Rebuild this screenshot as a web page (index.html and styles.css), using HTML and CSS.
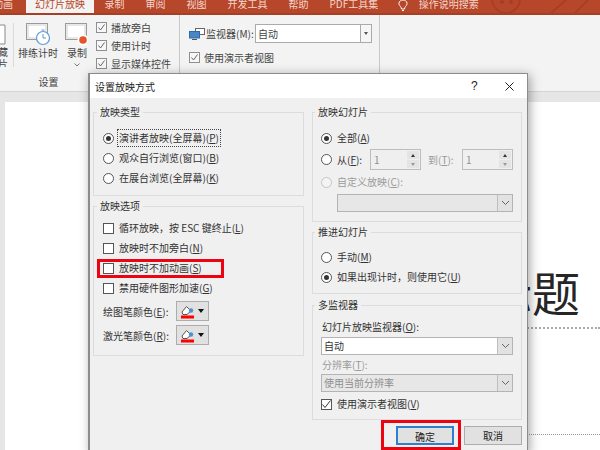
FILE: index.html
```html
<!DOCTYPE html>
<html lang="zh">
<head>
<meta charset="utf-8">
<title>设置放映方式</title>
<link rel="stylesheet" href="styles.css">
</head>
<body>
<div class="app">
  <div class="tabs">
    <span class="tab tab-first">动画</span>
    <span class="tab tab-active">幻灯片放映</span>
    <span class="tab">录制</span>
    <span class="tab">审阅</span>
    <span class="tab">视图</span>
    <span class="tab">开发工具</span>
    <span class="tab">帮助</span>
    <span class="tab">PDF工具集</span>
    <svg class="bulb" width="10" height="12" viewBox="0 0 10 12"><path d="M2.500 6.500C1 5 .8 3.800 1 3 1.500 1 3 0 5 0s3.500 1 4 3c.2.800 0 2-1.500 3.500C7 7 6.600 8 6.500 9h-3C3.400 8 3 7 2.500 6.500ZM4 10.500h2" fill="none" stroke="#fff" stroke-width="1"/></svg>
    <span class="tab tab-search">操作说明搜索</span>
    <svg class="circuit" width="110" height="15" viewBox="0 0 110 15"><g fill="none" stroke="#a63d22" stroke-width="1.500"><circle cx="16" cy="-1" r="14"/><path d="M0 14 42 14 60 14 76 0M84 14 98 0"/></g><circle cx="12" cy="2" r="2" fill="#a63d22"/><circle cx="21" cy="2" r="2" fill="#a63d22"/></svg>
  </div>
  <div class="ribbon">
    <div class="rb-clip">
      <svg class="rb-clip-icon" width="14" height="21" viewBox="0 0 14 21"><path d="M-6 1H5V20H-6" fill="#fff" stroke="#8a8a8a"/></svg>
      <div class="rb-clip-text">藏<br>片</div>
    </div>
    <div class="rb-group">
      <div class="rb-buttons">
        <div class="rb-btn rb-btn-a">
          <svg width="25" height="23" viewBox="0 0 25 23"><rect x=".5" y=".5" width="21" height="16" fill="#fff" stroke="#9a9a9a"/><rect x="2" y="2" width="18" height="13" fill="#fff" stroke="#d0d0d0"/><circle cx="17" cy="15" r="6.500" fill="#fff" stroke="#5b9bd5" stroke-width="1.200"/><path d="M17 11v4h3M15.500 7h3" fill="none" stroke="#5b9bd5"/></svg>
          <span>排练计时</span>
        </div>
        <div class="rb-btn rb-btn-b">
          <svg width="24" height="23" viewBox="0 0 24 23"><rect x=".5" y=".5" width="21" height="16" fill="#fff" stroke="#9a9a9a"/><rect x="2" y="2" width="18" height="13" fill="#fff" stroke="#d0d0d0"/><circle cx="18" cy="17" r="5.500" fill="#fff"/><circle cx="18" cy="17" r="3.800" fill="#e2552d"/></svg>
          <span>录制</span>
          <svg class="rb-chev" width="6" height="4" viewBox="0 0 6 4"><path d="M.5.500 3 3 5.500.500" fill="none" stroke="#777"/></svg>
        </div>
      </div>
      <div class="rb-label">设置</div>
    </div>
    <div class="rb-checks">
      <div class="rb-check"><span class="box box-rb"><svg width="9" height="9" viewBox="0 0 9 9"><path d="M1.500 4.500 3.500 7 7.500 1.500" fill="none" stroke="#666"/></svg></span>播放旁白</div>
      <div class="rb-check"><span class="box box-rb"><svg width="9" height="9" viewBox="0 0 9 9"><path d="M1.500 4.500 3.500 7 7.500 1.500" fill="none" stroke="#666"/></svg></span>使用计时</div>
      <div class="rb-check"><span class="box box-rb"><svg width="9" height="9" viewBox="0 0 9 9"><path d="M1.500 4.500 3.500 7 7.500 1.500" fill="none" stroke="#666"/></svg></span>显示媒体控件</div>
    </div>
    <div class="rb-monitor">
      <div class="rb-mon-row">
        <svg width="16" height="12" viewBox="0 0 16 12"><rect x="6.500" y=".5" width="9" height="6" fill="#fff" stroke="#666"/><rect x=".5" y="3.500" width="10" height="6.500" fill="#4a86c5" stroke="#2f6aa8"/><path d="M3 11.500h5" stroke="#555"/></svg>
        <span class="rb-mon-label">监视器(M):</span>
        <div class="rb-select"><span class="rb-select-val">自动</span><span class="rb-select-arrow"></span></div>
      </div>
      <div class="rb-check rb-check-mon"><span class="box box-rb"><svg width="9" height="9" viewBox="0 0 9 9"><path d="M1.500 4.500 3.500 7 7.500 1.500" fill="none" stroke="#666"/></svg></span>使用演示者视图</div>
    </div>
  </div>
  <div class="workspace">
    <div class="slide">
      <div class="slide-title">标题</div>
      <div class="slide-line"></div>
      <div class="slide-line slide-line-low"></div>
    </div>
  </div>
</div>

<div class="dialog">
  <div class="dlg-title">
    <span class="dlg-title-text">设置放映方式</span>
    <span class="dlg-help">?</span>
    <svg class="dlg-close" width="9" height="9" viewBox="0 0 9 9"><path d="M.5.500 8.500 8.500M8.500.500 .5 8.500" stroke="#222" fill="none"/></svg>
  </div>
  <div class="dlg-body">
    <div class="col">
      <fieldset class="grp grp-type">
        <legend>放映类型</legend>
        <div class="opt"><span class="radio radio-on"></span><span class="lbl lbl-focus">演讲者放映(全屏幕)(<u>P</u>)</span></div>
        <div class="opt"><span class="radio"></span><span class="lbl">观众自行浏览(窗口)(<u>B</u>)</span></div>
        <div class="opt"><span class="radio"></span><span class="lbl">在展台浏览(全屏幕)(<u>K</u>)</span></div>
      </fieldset>
      <fieldset class="grp grp-opts">
        <legend>放映选项</legend>
        <div class="opt"><span class="box"></span><span class="lbl">循环放映，按 ESC 键终止(<u>L</u>)</span></div>
        <div class="opt"><span class="box"></span><span class="lbl">放映时不加旁白(<u>N</u>)</span></div>
        <div class="opt opt-marked"><span class="box"></span><span class="lbl">放映时不加动画(<u>S</u>)</span></div>
        <div class="opt"><span class="box"></span><span class="lbl">禁用硬件图形加速(<u>G</u>)</span></div>
        <div class="pen-row pen-row-first">
          <span class="pen-label">绘图笔颜色(<u>E</u>):</span>
          <div class="pen-btn"><svg width="13" height="15" viewBox="0 0 13 15"><path d="M1 8 5.500 2.500 10 7 6 10.500H2Z" fill="#fff" stroke="#555"/><circle cx="10" cy="6.500" r="2.200" fill="#4f8fd0"/><rect y="11.500" width="13" height="3" fill="#f00"/></svg><span class="pen-caret"></span></div>
        </div>
        <div class="pen-row">
          <span class="pen-label">激光笔颜色(<u>R</u>):</span>
          <div class="pen-btn"><svg width="13" height="15" viewBox="0 0 13 15"><path d="M1 8 5.500 2.500 10 7 6 10.500H2Z" fill="#fff" stroke="#555"/><circle cx="10" cy="6.500" r="2.200" fill="#4f8fd0"/><rect y="11.500" width="13" height="3" fill="#f00"/></svg><span class="pen-caret"></span></div>
        </div>
      </fieldset>
    </div>
    <div class="col">
      <fieldset class="grp grp-slides">
        <legend>放映幻灯片</legend>
        <div class="ropt ropt-all"><span class="radio radio-on"></span><span class="lbl">全部(<u>A</u>)</span></div>
        <div class="ropt ropt-from">
          <span class="radio"></span><span class="lbl lbl-from">从(<u>F</u>):</span>
          <div class="spin"><span class="spin-val">1</span><span class="spin-btns"><span class="spin-up"></span><span class="spin-down"></span></span></div>
          <span class="lbl lbl-off lbl-to">到(<u>T</u>):</span>
          <div class="spin"><span class="spin-val">1</span><span class="spin-btns"><span class="spin-up"></span><span class="spin-down"></span></span></div>
        </div>
        <div class="ropt ropt-custom"><span class="radio radio-off"></span><span class="lbl lbl-off">自定义放映(<u>C</u>):</span></div>
        <div class="sel sel-custom sel-off"><span class="sel-val"></span><span class="sel-arrow"><svg width="9" height="6" viewBox="0 0 9 6"><path d="M1 1 4.500 4.500 8 1" fill="none" stroke="#666"/></svg></span></div>
      </fieldset>
      <fieldset class="grp grp-adv">
        <legend>推进幻灯片</legend>
        <div class="opt"><span class="radio"></span><span class="lbl">手动(<u>M</u>)</span></div>
        <div class="opt"><span class="radio radio-on"></span><span class="lbl">如果出现计时，则使用它(<u>U</u>)</span></div>
      </fieldset>
      <fieldset class="grp grp-multi">
        <legend>多监视器</legend>
        <div class="m-label">幻灯片放映监视器(<u>O</u>):</div>
        <div class="sel"><span class="sel-val">自动</span><span class="sel-arrow"><svg width="9" height="6" viewBox="0 0 9 6"><path d="M1 1 4.500 4.500 8 1" fill="none" stroke="#666"/></svg></span></div>
        <div class="m-label m-label-off">分辨率(<u>T</u>):</div>
        <div class="sel sel-off"><span class="sel-val">使用当前分辨率</span><span class="sel-arrow"><svg width="9" height="6" viewBox="0 0 9 6"><path d="M1 1 4.500 4.500 8 1" fill="none" stroke="#666"/></svg></span></div>
        <div class="m-check"><span class="box"><svg width="11" height="11" viewBox="0 0 11 11"><path d="M1.500 5.500 4 8.500 9.500 1.500" fill="none" stroke="#333"/></svg></span><span class="lbl">使用演示者视图(<u>V</u>)</span></div>
      </fieldset>
      <div class="actions">
        <button class="btn btn-ok">确定</button>
        <button class="btn">取消</button>
      </div>
    </div>
  </div>
</div>
</body>
</html>
```

FILE: styles.css
```css
*, *::before, *::after { box-sizing: border-box; }
html, body { margin: 0; height: 100%; overflow: hidden; }
body { font-family: "Noto Sans CJK SC", "Liberation Sans", sans-serif; font-size: 10px; color: #333; position: relative; background: #e6e6e6; }
u { text-underline-offset: 1px; }

.app { width: 600px; height: 450px; display: flex; flex-direction: column; }

.tabs { height: 15px; flex: none; background: #b7472a; border-bottom: 2px solid #a63f26; display: flex; align-items: flex-start; color: #f3d6cc; position: relative; overflow: hidden; }
.tab { padding: 0 10.5px; line-height: 7px; white-space: nowrap; }
.tab-first { margin-left: -7px; padding: 0 13px 0 0; }
.tab-active { background: #f3f3f3; color: #b7472a; height: 15px; padding: 0; width: 68px; text-align: center; }
.bulb { margin-left: 9px; flex: none; }
.tab-search { padding-left: 11px; }
.circuit { position: absolute; right: 0; top: 0; }

.ribbon { height: 77px; flex: none; background: #f3f3f3; border-bottom: 1px solid #d4d4d4; display: flex; color: #444; }
.rb-clip { width: 14px; flex: none; border-right: 1px solid #dadada; margin: 8px 0 24px; overflow: hidden; }
.rb-clip-icon { display: block; margin-top: 1px; }
.rb-clip-text { line-height: 12px; margin: 1px 0 0 -2px; }
.rb-group { width: 79px; flex: none; display: flex; flex-direction: column; }
.rb-buttons { display: flex; height: 58px; padding-top: 8px; }
.rb-btn { display: flex; flex-direction: column; align-items: center; flex: none; line-height: 13px; white-space: nowrap; }
.rb-btn svg { display: block; margin-bottom: 0; }
.rb-btn-a { width: 48px; }
.rb-btn-b { width: 30px; }
.rb-btn .rb-chev { margin: 4px 0 0; }
.rb-label { text-align: center; line-height: 14px; margin-top: 2px; padding-right: 10px; }
.rb-checks { width: 87px; flex: none; padding: 3px 0 0 3px; border-right: 1px solid #c9c9c9; }
.rb-check { display: flex; align-items: center; height: 18px; white-space: nowrap; }
.box { width: 11px; height: 11px; border: 1px solid #555; background: #fff; flex: none; display: flex; align-items: center; justify-content: center; }
.box svg { display: block; flex: none; }
.box-rb { border-color: #8f8f8f; margin-right: 4px; background: #f7f7f7; }
.rb-monitor { width: 200px; flex: none; padding: 9px 0 0 9px; border-right: 1px solid #c9c9c9; }
.rb-mon-row { display: flex; align-items: center; height: 19px; }
.rb-mon-label { margin-left: 1px; width: 49px; flex: none; white-space: nowrap; }
.rb-select { width: 117px; height: 19px; display: flex; background: #fff; border: 1px solid #aaa; }
.rb-select-val { flex: 1; padding-left: 2px; line-height: 17px; }
.rb-select-arrow { width: 11px; border-left: 1px solid #aaa; background: #f6f6f6; display: flex; align-items: center; justify-content: center; }
.rb-select-arrow::after { content: ""; border: 2px solid transparent; border-top: 3px solid #555; border-bottom: 0; }
.rb-check-mon { margin-top: 5px; }

.workspace { flex: 1; padding: 10px 0 0 5px; background: #e6e6e6; overflow: hidden; }
.slide { height: 100%; background: #fff; display: flex; flex-direction: column; align-items: flex-end; }
.slide-title { font-size: 48px; line-height: 60px; color: #262626; margin-top: 159px; white-space: nowrap; padding-right: 20px; }
.slide-line { width: 300px; height: 0; border-top: 2px dotted #aaa; margin-top: 6px; }
.slide-line-low { border-top: 1px dotted #999; margin-top: 105px; }

.dialog { position: absolute; left: 88px; top: 73px; width: 440px; height: 380px; background: #f0f0f0; border: 1px solid #8c8c8c; border-left-width: 2px; box-shadow: 2px 2px 10px rgba(0,0,0,.35); }
.dlg-title { height: 24px; background: #fff; display: flex; align-items: center; padding-left: 5px; }
.dlg-title-text { flex: 1; color: #222; }
.dlg-help { width: 16px; font-size: 12px; color: #222; margin-right: 18px; font-family: "Liberation Sans", sans-serif; }
.dlg-close { margin-right: 13px; }
.dlg-body { display: flex; gap: 8px; padding: 7px 0 0 3px; }
.col { width: 211px; flex: none; display: flex; flex-direction: column; }
.col + .col { width: 210px; }

.grp { margin: 0; min-width: 0; border: 1px solid #dcdcdc; padding: 0 0 0 9px; }
.grp legend { margin-left: -6px; padding: 0 3px; line-height: 14px; color: #333; }
.grp-type { height: 91px; padding-top: 9px; }
.grp-opts { height: 157px; margin-top: 3px; padding-top: 5px; }
.grp-slides { height: 117px; padding-top: 9px; padding-left: 8px; }
.grp-adv { height: 69px; margin-top: 3px; padding-top: 8px; padding-left: 8px; }
.grp-multi { height: 122px; margin-top: 4px; padding: 8px 8px 0; }

.opt { display: flex; align-items: center; height: 20px; white-space: nowrap; }
.opt-marked { position: relative; }
.opt-marked::after { content: ""; position: absolute; left: -6px; top: 1px; width: 127px; height: 19px; border: 3px solid #ec0510; }
.lbl { margin-left: 4px; padding: 0 1px; line-height: 16px; color: #333; white-space: nowrap; }
.lbl-focus { outline: 1px dotted #444; }
.lbl-off { color: #9a9a9a; }
.radio { width: 11px; height: 11px; border-radius: 50%; border: 1px solid #555; background: #fff; flex: none; display: flex; align-items: center; justify-content: center; }
.radio-on::after { content: ""; width: 5px; height: 5px; border-radius: 50%; background: #333; }
.radio-off { border-color: #c4c4c4; background: #f4f4f4; }

.pen-row { display: flex; align-items: center; height: 24px; white-space: nowrap; }
.pen-row-first { margin-top: 1px; }
.pen-label { width: 73px; flex: none; }
.pen-btn { width: 33px; height: 20px; background: #e1e1e1; border: 1px solid #adadad; display: flex; align-items: center; justify-content: center; gap: 4px; }
.pen-caret { border: 3px solid transparent; border-top: 4px solid #111; border-bottom: 0; }

.ropt { display: flex; align-items: center; white-space: nowrap; }
.ropt-all { height: 20px; }
.ropt-from { height: 21px; margin-top: 1px; }
.ropt-custom { height: 20px; margin-top: 2px; }
.lbl-from { width: 34px; flex: none; }
.lbl-to { width: 33px; margin-left: 6px; margin-right: 2px; flex: none; }
.spin { width: 51px; height: 21px; background: #efefef; border: 1px solid #bdbdbd; display: flex; flex: none; }
.spin-val { flex: 1; padding-left: 3px; line-height: 19px; color: #8e8e8e; }
.spin-btns { width: 14px; display: flex; flex-direction: column; padding: 1px; gap: 1px; }
.spin-up, .spin-down { flex: 1; background: #e4e4e4; display: flex; align-items: center; justify-content: center; }
.spin-up::after { content: ""; border: 2.500px solid transparent; border-bottom: 3px solid #333; border-top: 0; }
.spin-down::after { content: ""; border: 2.500px solid transparent; border-top: 3px solid #999; border-bottom: 0; }

.sel { height: 18px; background: #fff; border: 1px solid #b4b4b4; display: flex; }
.sel-val { flex: 1; padding-left: 2px; line-height: 16px; color: #333; }
.sel-arrow { width: 15px; background: #e2e2e2; border-left: 1px solid #bdbdbd; display: flex; align-items: center; justify-content: center; }
.sel-arrow svg { display: block; }
.sel-off { background: #e7e7e7; }
.sel-off .sel-val { color: #8e8e8e; }
.sel-custom { width: 176px; margin: 2px 0 0 16px; }

.m-label { line-height: 14px; height: 17px; padding-left: 1px; }
.m-label-off { color: #9a9a9a; margin-top: 3px; height: 16px; }
.m-check { display: flex; align-items: center; height: 18px; margin-top: 3px; }

.actions { display: flex; justify-content: flex-end; gap: 10px; padding-top: 6px; position: relative; }
.actions::before { content: ""; position: absolute; left: 69px; top: 0; width: 80px; height: 30px; border: 3px solid #ec0510; }
.btn { width: 58px; height: 19px; font: inherit; color: #222; background: #e1e1e1; border: 1px solid #adadad; padding: 0; line-height: 17px; }
.btn-ok { border: 2px solid #2c7fd1; }
```
